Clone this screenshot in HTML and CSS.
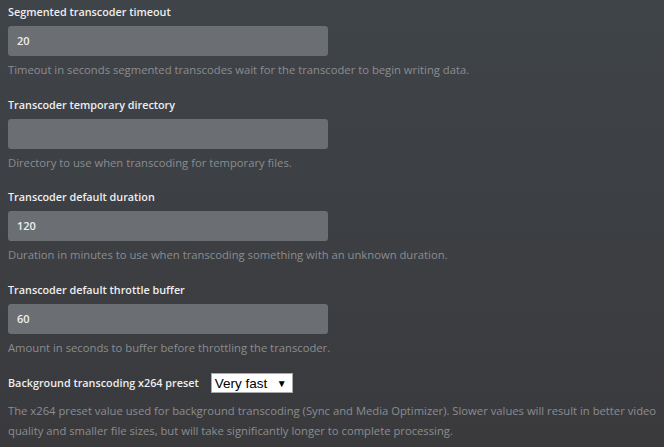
FILE: index.html
```html
<!DOCTYPE html>
<html>
<head>
<meta charset="utf-8">
<link rel="stylesheet" href="styles.css">
</head>
<body>
<div class="settings">
  <div class="field">
    <label class="label">Segmented transcoder timeout</label>
    <div class="input">20</div>
    <div class="help">Timeout in seconds segmented transcodes wait for the transcoder to begin writing data.</div>
  </div>
  <div class="field">
    <label class="label">Transcoder temporary directory</label>
    <div class="input"></div>
    <div class="help">Directory to use when transcoding for temporary files.</div>
  </div>
  <div class="field">
    <label class="label">Transcoder default duration</label>
    <div class="input">120</div>
    <div class="help">Duration in minutes to use when transcoding something with an unknown duration.</div>
  </div>
  <div class="field">
    <label class="label">Transcoder default throttle buffer</label>
    <div class="input">60</div>
    <div class="help">Amount in seconds to buffer before throttling the transcoder.</div>
  </div>
  <div class="field">
    <div class="inline">
      <label class="label">Background transcoding x264 preset</label>
      <div class="select"><span>Very fast</span><span class="arrow">▼</span></div>
    </div>
    <div class="help multi">The x264 preset value used for background transcoding (Sync and Media Optimizer). Slower values will result in better video quality and smaller file sizes, but will take significantly longer to complete processing.</div>
  </div>
</div>
</body>
</html>
```
FILE: styles.css
```css
html, body {
  margin: 0;
  height: 100%;
}
body {
  background: linear-gradient(to bottom, #3f4449 0%, #3c3e42 60%, #3a3a3d 100%);
  font-family: "Open Sans", "Liberation Sans", sans-serif;
  overflow: hidden;
}
.settings {
  padding: 3px 8px 0 8px;
  display: flex;
  flex-direction: column;
}
.field {
  display: flex;
  flex-direction: column;
  height: 92.5px;
}
.label {
  font-size: 10.8px;
  font-weight: 600;
  color: #eeeeee;
  line-height: 18px;
  height: 18px;
}
.input {
  margin-top: 5px;
  width: 320px;
  height: 30px;
  box-sizing: border-box;
  background: #6b6e72;
  border-radius: 3px;
  color: #eeeeee;
  font-size: 11px;
  font-weight: 600;
  line-height: 30px;
  padding-left: 9px;
}
.help {
  margin-top: 5px;
  font-size: 11.25px;
  color: #8b8d90;
  line-height: 18px;
}
.multi {
  margin-top: 8px;
  line-height: 20px;
  margin-right: -8px;
}
.inline {
  display: flex;
  align-items: center;
  gap: 12px;
  margin-top: 0;
}
.select {
  width: 82px;
  height: 20px;
  box-sizing: border-box;
  background: #ffffff;
  border: 1px solid #a9a9a9;
  display: flex;
  align-items: center;
  justify-content: space-between;
  padding: 0 5px 0 3px;
  font-family: "Liberation Sans", Arial, sans-serif;
  font-size: 13.5px;
  color: #000;
}
.arrow {
  font-size: 10px;
}
```
